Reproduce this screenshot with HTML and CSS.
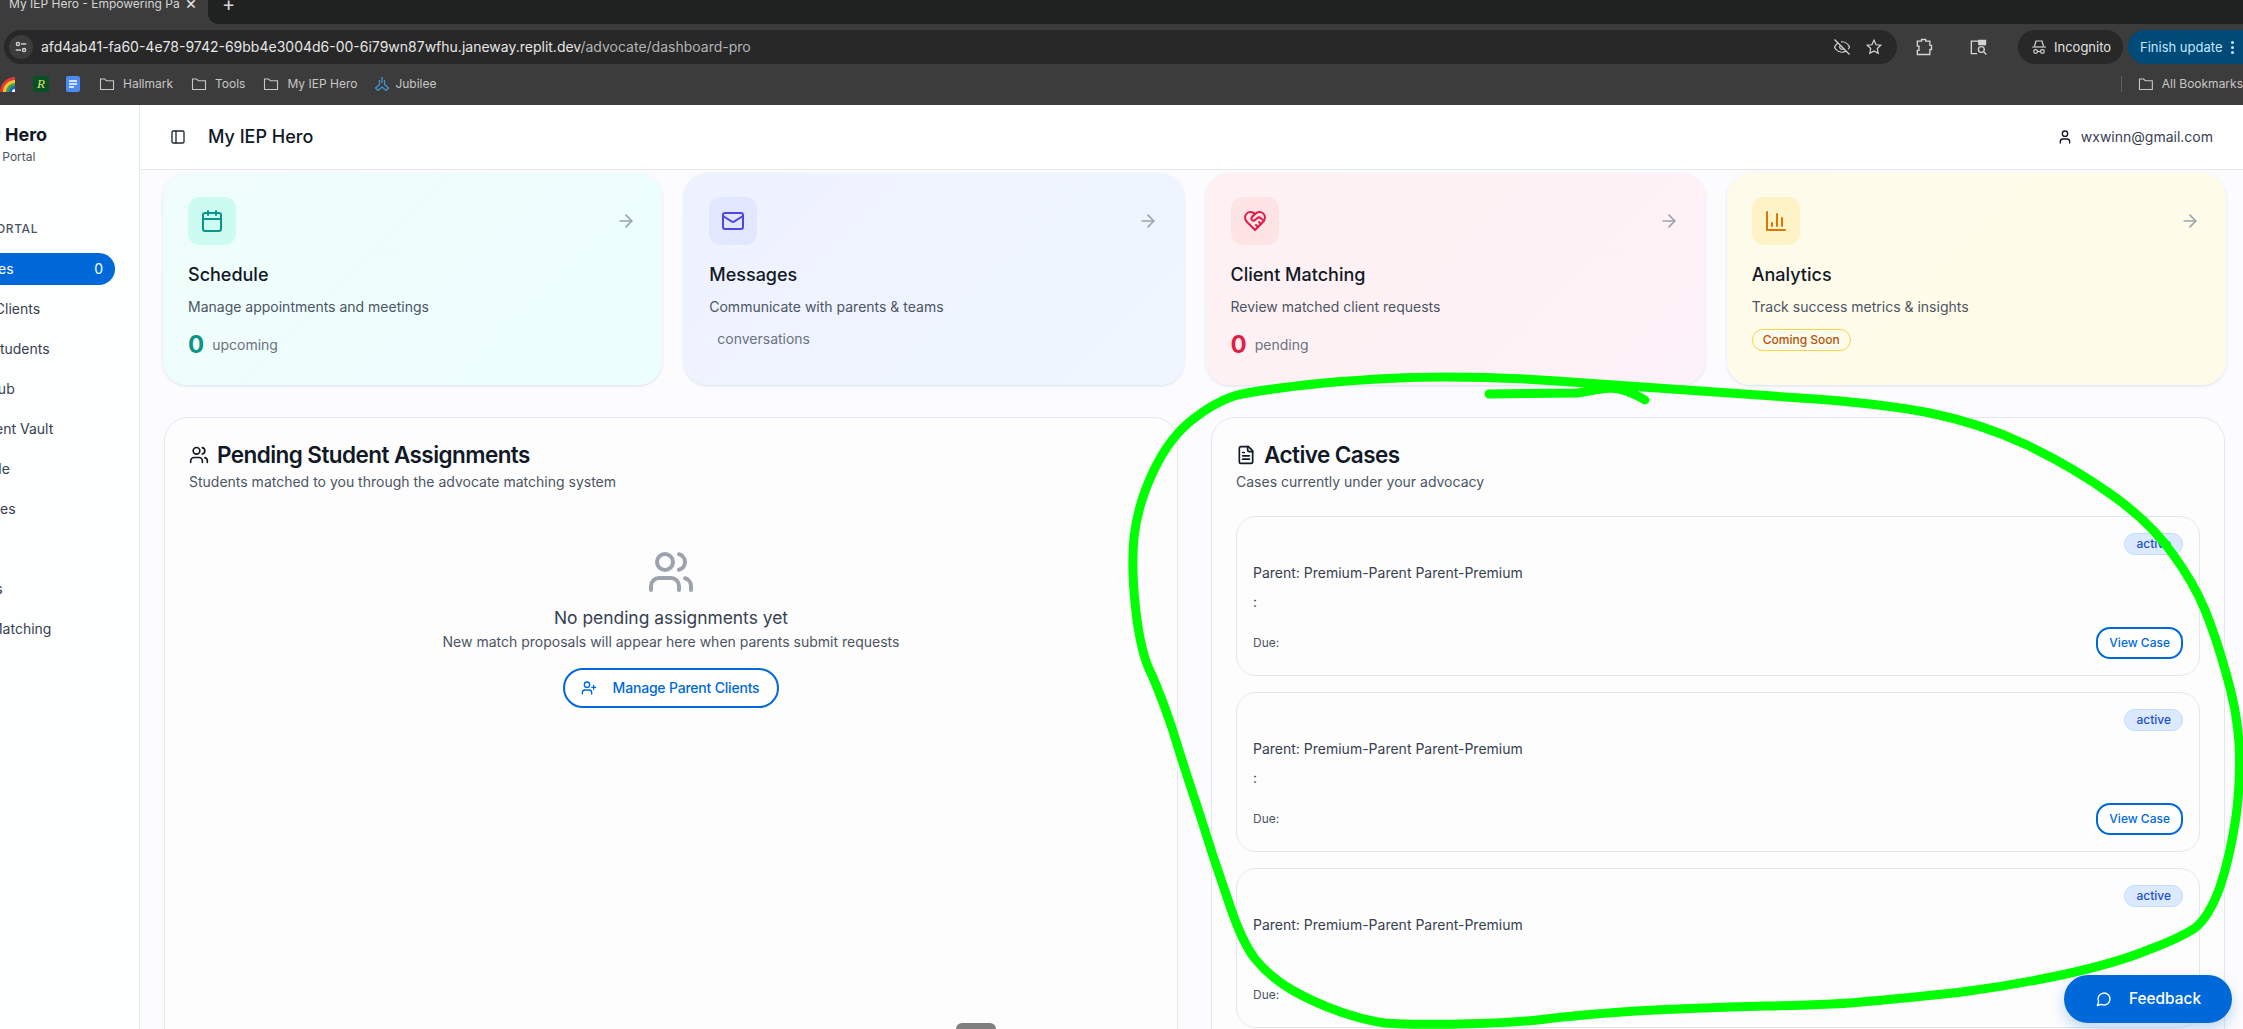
FILE: index.html
```html
<!DOCTYPE html>
<html lang="en">
<head>
  <meta charset="UTF-8" />
  <title>My IEP Hero - Empowering Parents</title>
  <link rel="stylesheet" href="styles.css">
</head>
<body>

  <svg class="sprite" width="0" height="0">
    <symbol id="i-arrow" viewBox="0 0 24 24"><path d="M5 12h14"/><path d="m12 5 7 7-7 7"/></symbol>
    <symbol id="i-users" viewBox="0 0 24 24"><path d="M16 21v-2a4 4 0 0 0-4-4H6a4 4 0 0 0-4 4v2"/><circle cx="9" cy="7" r="4"/><path d="M22 21v-2a4 4 0 0 0-3-3.87"/><path d="M16 3.13a4 4 0 0 1 0 7.75"/></symbol>
    <symbol id="i-folder" viewBox="0 0 16 16"><path d="M1.5 13.5V3h4.2l1.6 1.7h7.2v8.8z"/></symbol>
  </svg>

  <!-- browser chrome -->
  <div class="tabstrip">
    <div class="tab">
      <span class="tab-title">My IEP Hero - Empowering Pa</span>
      <span class="tab-close">×</span>
    </div>
    <div class="tab-rest"><span class="tab-new">+</span></div>
  </div>

  <div class="toolbar">
    <div class="address">
      <span class="site-btn">
        <svg viewBox="0 0 16 16" class="chrome-icon small"><circle cx="4.5" cy="4.5" r="1.8"/><path d="M8 4.500h6"/><circle cx="11.500" cy="11.500" r="1.8"/><path d="M2 11.500h6"/></svg>
      </span>
      <span class="url">afd4ab41-fa60-4e78-9742-69bb4e3004d6-00-6i79wn87wfhu.janeway.replit.dev<span class="url-path">/advocate/dashboard-pro</span></span>
      <svg viewBox="0 0 24 24" class="chrome-icon addr-eye"><path d="M9.88 9.88a3 3 0 1 0 4.24 4.24"/><path d="M10.73 5.08A10.43 10.43 0 0 1 12 5c7 0 10 7 10 7a13.16 13.16 0 0 1-1.67 2.68"/><path d="M6.61 6.61A13.526 13.526 0 0 0 2 12s3 7 10 7a9.74 9.74 0 0 0 5.39-1.61"/><path d="m2 2 20 20"/></svg>
      <svg viewBox="0 0 24 24" class="chrome-icon addr-star"><polygon points="12 3 14.8 9 21 9.7 16.4 14 17.6 20.5 12 17.3 6.4 20.5 7.6 14 3 9.7 9.2 9"/></svg>
    </div>
    <div class="tools">
      <svg viewBox="0 0 24 24" class="chrome-icon tool-icon"><path d="M4 5h5V3h5v2h5v5h2v5h-2v6H4v-5h2v-5H4z"/></svg>
      <span class="tool-sep"></span>
      <svg viewBox="0 0 24 24" class="chrome-icon tool-icon"><path d="M11 20H4V5h16v5"/><path class="fill" d="M13 4h8v5h-8z"/><circle cx="16" cy="15" r="3.500"/><path d="m19 18 3 3"/></svg>
      <span class="tool-sep"></span>
      <div class="incognito">
        <svg viewBox="0 0 24 24" class="chrome-icon"><path d="M6 11 8 4h8l2 7"/><path d="M3 12h18"/><circle cx="7.500" cy="18" r="2.500"/><circle cx="16.500" cy="18" r="2.500"/><path d="M10 18h4"/></svg>
        <span>Incognito</span>
      </div>
      <div class="finish"><span>Finish update</span><span class="dots"></span></div>
    </div>
  </div>

  <div class="bookmarks">
    <svg viewBox="0 0 16 16" class="bm-rainbow"><circle cx="16" cy="16" r="15" fill="#e53935"/><circle cx="16" cy="16" r="12" fill="#fbc02d"/><circle cx="16" cy="16" r="9" fill="#43a047"/><circle cx="16" cy="16" r="6" fill="#1e63d0"/><circle cx="16" cy="16" r="3" fill="#fff"/></svg>
    <span class="bm-r">R</span>
    <svg viewBox="0 0 16 16" class="bm-docs"><rect x="1" width="14" height="16" rx="2" fill="#4a8af4"/><path d="M4 5h8M4 8h8M4 11h5" stroke="#fff" stroke-width="1.6"/></svg>
    <a class="bm"><svg class="bm-folder"><use href="#i-folder"/></svg>Hallmark</a>
    <a class="bm"><svg class="bm-folder"><use href="#i-folder"/></svg>Tools</a>
    <a class="bm"><svg class="bm-folder"><use href="#i-folder"/></svg>My IEP Hero</a>
    <a class="bm bm-jubilee">
      <svg viewBox="0 0 16 16" class="bm-jub"><path d="M8 1v6M5.500 4v4.500L1.500 12l2.500 2.500L8 11l4 3.500 2.500-2.500-4-3.500V4"/></svg>Jubilee
    </a>
    <span class="bm-sep"></span>
    <a class="bm bm-all"><svg class="bm-folder"><use href="#i-folder"/></svg>All Bookmarks</a>
  </div>

  <!-- app -->
  <div class="app">
    <aside class="sidebar">
      <div class="side-inner">
        <div class="logo">My IEP Hero</div>
        <div class="logo-sub">Advocate Portal</div>
        <div class="side-label">Advocate Portal</div>
        <nav class="nav">
          <a class="nav-item active"><span>My Cases</span><span>0</span></a>
          <a class="nav-item">Parent Clients</a>
          <a class="nav-item item-students">Paired Students</a>
          <a class="nav-item">Tools Hub</a>
          <a class="nav-item">Document Vault</a>
          <a class="nav-item">Schedule</a>
          <a class="nav-item">Messages</a>
          <a class="nav-item">Help</a>
          <a class="nav-item">Invoices</a>
          <a class="nav-item">Client Matching</a>
        </nav>
      </div>
    </aside>

    <main class="main">
      <header class="topbar">
        <svg viewBox="0 0 24 24" class="icon toggle"><rect x="3" y="3" width="18" height="18" rx="2"/><path d="M9 3v18"/></svg>
        <h1>My IEP Hero</h1>
        <div class="account">
          <svg viewBox="0 0 24 24" class="icon"><path d="M19 21v-2a4 4 0 0 0-4-4H9a4 4 0 0 0-4 4v2"/><circle cx="12" cy="7" r="4"/></svg>
          <span>wxwinn@gmail.com</span>
        </div>
      </header>

      <div class="content">
        <section class="quick">
          <div class="quick-card teal">
            <div class="quick-top">
              <span class="quick-icon"><svg viewBox="0 0 24 24" class="icon"><path d="M8 2v4"/><path d="M16 2v4"/><rect x="3" y="4" width="18" height="18" rx="2"/><path d="M3 10h18"/></svg></span>
              <svg class="icon arrow"><use href="#i-arrow"/></svg>
            </div>
            <h3>Schedule</h3>
            <p>Manage appointments and meetings</p>
            <div class="stat"><strong>0</strong><span>upcoming</span></div>
          </div>

          <div class="quick-card indigo">
            <div class="quick-top">
              <span class="quick-icon"><svg viewBox="0 0 24 24" class="icon"><rect x="2" y="4" width="20" height="16" rx="2"/><path d="m22 7-8.97 5.700a1.940 1.940 0 0 1-2.060 0L2 7"/></svg></span>
              <svg class="icon arrow"><use href="#i-arrow"/></svg>
            </div>
            <h3>Messages</h3>
            <p>Communicate with parents &amp; teams</p>
            <div class="stat"><strong></strong><span>conversations</span></div>
          </div>

          <div class="quick-card rose">
            <div class="quick-top">
              <span class="quick-icon"><svg viewBox="0 0 24 24" class="icon"><path d="M19 14c1.490-1.460 3-3.210 3-5.500A5.500 5.500 0 0 0 16.500 3c-1.760 0-3 .5-4.500 2-1.500-1.500-2.740-2-4.500-2A5.500 5.500 0 0 0 2 8.500c0 2.300 1.500 4.050 3 5.500l7 7Z"/><path d="M12 5 9.040 7.960a2.170 2.170 0 0 0 0 3.080c.82.82 2.130.85 3 .07l2.070-1.900a2.820 2.820 0 0 1 3.790 0l2.960 2.660"/><path d="m18 15-2-2"/><path d="m15 18-2-2"/></svg></span>
              <svg class="icon arrow"><use href="#i-arrow"/></svg>
            </div>
            <h3>Client Matching</h3>
            <p>Review matched client requests</p>
            <div class="stat"><strong>0</strong><span>pending</span></div>
          </div>

          <div class="quick-card amber">
            <div class="quick-top">
              <span class="quick-icon"><svg viewBox="0 0 24 24" class="icon"><path d="M3 3v18h18"/><path d="M18 17V9"/><path d="M13 17V5"/><path d="M8 17v-3"/></svg></span>
              <svg class="icon arrow"><use href="#i-arrow"/></svg>
            </div>
            <h3>Analytics</h3>
            <p>Track success metrics &amp; insights</p>
            <div class="stat"><span class="soon">Coming Soon</span></div>
          </div>
        </section>

        <section class="panels">
          <div class="panel">
            <h2><svg class="icon"><use href="#i-users"/></svg>Pending Student Assignments</h2>
            <p class="panel-sub">Students matched to you through the advocate matching system</p>
            <div class="empty">
              <svg class="icon empty-icon"><use href="#i-users"/></svg>
              <h4>No pending assignments yet</h4>
              <p>New match proposals will appear here when parents submit requests</p>
              <a class="btn-manage">
                <svg viewBox="0 0 24 24" class="icon"><path d="M16 21v-2a4 4 0 0 0-4-4H6a4 4 0 0 0-4 4v2"/><circle cx="9" cy="7" r="4"/><path d="M19 8v6"/><path d="M22 11h-6"/></svg>
                Manage Parent Clients
              </a>
            </div>
          </div>

          <div class="panel">
            <h2><svg viewBox="0 0 24 24" class="icon"><path d="M15 2H6a2 2 0 0 0-2 2v16a2 2 0 0 0 2 2h12a2 2 0 0 0 2-2V7Z"/><path d="M14 2v4a2 2 0 0 0 2 2h4"/><path d="M10 9H8"/><path d="M16 13H8"/><path d="M16 17H8"/></svg>Active Cases</h2>
            <p class="panel-sub">Cases currently under your advocacy</p>
            <div class="cases">
              <div class="case">
                <div class="case-head"><span class="badge">active</span></div>
                <div class="case-parent">Parent: Premium-Parent Parent-Premium</div>
                <div class="case-line">:</div>
                <div class="case-foot"><span>Due:</span><a class="btn-view">View Case</a></div>
              </div>
              <div class="case">
                <div class="case-head"><span class="badge">active</span></div>
                <div class="case-parent">Parent: Premium-Parent Parent-Premium</div>
                <div class="case-line">:</div>
                <div class="case-foot"><span>Due:</span><a class="btn-view">View Case</a></div>
              </div>
              <div class="case">
                <div class="case-head"><span class="badge">active</span></div>
                <div class="case-parent">Parent: Premium-Parent Parent-Premium</div>
                <div class="case-line">:</div>
                <div class="case-foot"><span>Due:</span><a class="btn-view">View Case</a></div>
              </div>
            </div>
          </div>
        </section>
      </div>
    </main>
  </div>

  <!-- hand drawn annotation on top of the screenshot -->
  <svg class="scribble" viewBox="0 0 2243 1029">
    <path d="M1614 385 L1800 398 Q1879 403 1930 413 Q1980 423 2027 445 Q2073 467 2112 495 Q2151 523 2172 553 Q2194 583 2205 610 Q2216 637 2226 673 Q2237 710 2239 743 Q2241 777 2236 817 Q2230 857 2220 887 Q2209 917 2195 928 Q2180 938 2148 950 Q2116 963 2066 974 Q2015 985 1962 992 Q1908 998 1872 1001 Q1836 1005 1765 1006 Q1693 1008 1636 1011 Q1578 1015 1546 1019 Q1514 1023 1460 1024 Q1406 1025 1385 1023 Q1363 1020 1338 1011 Q1313 1002 1292 990 Q1270 977 1256 960 Q1242 943 1228 900 Q1213 857 1199 812 Q1184 767 1172 728 Q1159 690 1150 671 Q1141 653 1136 612 Q1131 570 1134 537 Q1138 503 1154 470 Q1170 437 1192 420 Q1213 403 1234 396 Q1256 390 1324 383 Q1392 377 1446 377 Q1500 377 1557 381 L1614 385"/>
    <path d="M1489 394 L1578 393 Q1598 389 1610 388 Q1625 388 1645 400"/>
  </svg>

  <a class="feedback">
    <svg viewBox="0 0 24 24" class="icon"><path d="M7.900 20A9 9 0 1 0 4 16.100L2 22Z"/></svg>
    Feedback
  </a>
  <div class="grabber"></div>

</body>
</html>
```

FILE: styles.css
```css
* {
  box-sizing: border-box;
}

html, body {
  margin: 0;
  height: 100%;
  overflow: hidden;
}

body {
  position: relative;
  font-family: Inter, "Noto Sans", sans-serif;
  font-size: 14px;
  line-height: 20px;
  color: #111827;
  background: #fcfcfe;
}

h1, h2, h3, h4, p {
  margin: 0;
}

.sprite {
  position: absolute;
}

.icon {
  width: 20px;
  height: 20px;
  fill: none;
  stroke: currentColor;
  stroke-width: 2;
  stroke-linecap: round;
  stroke-linejoin: round;
  flex: none;
}

/* browser chrome */
.tabstrip {
  display: flex;
  height: 24px;
  background: #3c3c3c;
  overflow: hidden;
}

.tab {
  display: flex;
  width: 208px;
  padding-left: 9px;
  font-size: 12px;
  line-height: 16px;
  color: #d5d5d5;
}

.tab-title {
  width: 172px;
  margin-top: -4px;
  white-space: nowrap;
  overflow: hidden;
}

.tab-close {
  margin-top: -5px;
  margin-left: 4px;
  font-size: 18px;
  color: #e3e3e3;
}

.tab-rest {
  flex: 1;
  background: #202221;
  border-bottom-left-radius: 10px;
  padding-left: 14px;
}

.tab-new {
  display: block;
  margin-top: -6px;
  font-size: 20px;
  color: #d5d5d5;
}

.toolbar {
  display: flex;
  height: 46px;
  padding: 6px 0 6px 4px;
  background: #3c3c3c;
}

.address {
  flex: 1;
  display: flex;
  align-items: center;
  height: 34px;
  padding: 0 14px 0 5px;
  background: #282828;
  border-radius: 17px;
}

.site-btn {
  display: flex;
  align-items: center;
  justify-content: center;
  width: 24px;
  height: 24px;
  border-radius: 50%;
  background: #3c3c3c;
}

.chrome-icon {
  width: 18px;
  height: 18px;
  fill: none;
  stroke: #d5d5d5;
  stroke-width: 1.6;
  flex: none;
}

.chrome-icon.small {
  width: 14px;
  height: 14px;
}

.chrome-icon .fill {
  fill: #d5d5d5;
}

.url {
  flex: 1;
  margin-left: 8px;
  font-size: 14px;
  color: #e6e6e6;
  white-space: nowrap;
}

.url-path {
  color: #b4b4b4;
}

.addr-star {
  margin-left: 14px;
}

.tools {
  display: flex;
  align-items: center;
  width: 346px;
  height: 34px;
  padding-left: 17px;
  overflow: hidden;
}

.tool-icon {
  width: 20px;
  height: 20px;
}

.tool-sep {
  width: 2px;
  height: 16px;
  margin: 0 17px;
  background: #5e5e5e;
}

.incognito {
  display: flex;
  align-items: center;
  gap: 6px;
  width: 105px;
  height: 34px;
  margin-left: -4px;
  padding-left: 12px;
  font-size: 13px;
  color: #e3e3e3;
  background: #282828;
  border-radius: 17px;
  flex: none;
}

.finish {
  display: flex;
  align-items: center;
  gap: 9px;
  width: 130px;
  height: 34px;
  margin-left: 5px;
  padding-left: 12px;
  font-size: 13px;
  color: #c2e7ff;
  background: #004a77;
  border-radius: 17px;
  flex: none;
}

.dots {
  width: 3px;
  height: 3px;
  border-radius: 50%;
  background: #c2e7ff;
  box-shadow: 0 -5px 0 #c2e7ff, 0 5px 0 #c2e7ff;
}

.bookmarks {
  display: flex;
  align-items: center;
  height: 35px;
  padding-bottom: 7px;
  background: #3c3c3c;
  font-size: 12px;
  color: #c7c7c7;
}

.bm-rainbow {
  width: 16px;
  height: 16px;
  margin-left: -1px;
}

.bm-r {
  width: 16px;
  height: 16px;
  margin-left: 18px;
  text-align: center;
  font: italic 13px/16px "Liberation Serif", serif;
  color: #d8e46b;
  background: #0b4f25;
}

.bm-docs {
  width: 16px;
  height: 16px;
  margin-left: 16px;
}

.bm {
  display: flex;
  align-items: center;
  gap: 8px;
  margin-left: 18px;
}

.bm-folder {
  width: 16px;
  height: 16px;
  fill: none;
  stroke: #c7c7c7;
  stroke-width: 1.1;
}

.bm-jubilee {
  gap: 5px;
  margin-left: 17px;
}

.bm-jub {
  width: 16px;
  height: 16px;
  fill: none;
  stroke: #3f9ad6;
  stroke-width: 1.2;
}

.bm-sep {
  width: 1px;
  height: 16px;
  margin-left: auto;
  background: #5e5e5e;
}

.bm-all {
  width: 105px;
  margin-left: 16px;
  white-space: nowrap;
  overflow: hidden;
}

/* app shell */
.app {
  display: flex;
  height: 924px;
}

.sidebar {
  width: 140px;
  background: #fdfefe;
  border-right: 1px solid #e8eaee;
  overflow: hidden;
  flex: none;
}

.side-inner {
  width: 235px;
  margin-left: -120px;
  padding-top: 16px;
}

.logo {
  padding-left: 61px;
  font-size: 18px;
  line-height: 28px;
  font-weight: 700;
  white-space: nowrap;
}

.logo-sub {
  padding-left: 65px;
  font-size: 12px;
  line-height: 16px;
  color: #4b5563;
  white-space: nowrap;
}

.side-label {
  margin-top: 56px;
  padding-left: 34px;
  font-size: 12px;
  line-height: 16px;
  font-weight: 500;
  letter-spacing: 0.05em;
  text-transform: uppercase;
  color: #4b5563;
  white-space: nowrap;
}

.nav {
  display: flex;
  flex-direction: column;
  gap: 8px;
  margin-top: 16px;
}

.nav-item {
  display: flex;
  align-items: center;
  justify-content: space-between;
  height: 32px;
  padding: 0 12px 0 68px;
  color: #374151;
  white-space: nowrap;
}

.nav-item.item-students {
  padding-left: 65px;
}

.nav-item.active {
  color: #fff;
  background: #0069d9;
  border-radius: 16px;
}

.main {
  flex: 1;
  min-width: 0;
}

.topbar {
  display: flex;
  align-items: center;
  height: 65px;
  padding: 0 30px 1px 30px;
  background: #fff;
  border-bottom: 1px solid #e5e7eb;
}

.toggle {
  width: 16px;
  height: 16px;
  color: #1f2937;
}

.topbar h1 {
  margin-left: 22px;
  font-size: 18px;
  line-height: 28px;
  font-weight: 500;
}

.account {
  display: flex;
  align-items: center;
  gap: 8px;
  margin-left: auto;
  color: #374151;
}

.account .icon {
  width: 16px;
  height: 16px;
  color: #111827;
}

.content {
  padding: 3px 17px 0 23px;
}

/* quick action cards */
.quick {
  display: grid;
  grid-template-columns: repeat(4, 1fr);
  gap: 22px;
}

.quick-card {
  padding: 24px 25px;
  border-radius: 24px;
  box-shadow: 0 1px 3px rgba(59, 90, 160, 0.18);
}

.teal { background: linear-gradient(135deg, #f0fdfa, #ecfeff); }
.indigo { background: linear-gradient(135deg, #eef2ff, #eff6ff); }
.rose { background: linear-gradient(135deg, #fff1f2, #fdf2f8); }
.amber { background: linear-gradient(135deg, #fffbeb, #fefce8); }

.quick-top {
  display: flex;
  align-items: center;
  justify-content: space-between;
}

.quick-icon {
  display: flex;
  align-items: center;
  justify-content: center;
  width: 48px;
  height: 48px;
  border-radius: 12px;
}

.quick-icon .icon {
  width: 24px;
  height: 24px;
}

.teal .quick-icon { background: #ccfbf1; color: #0d9488; }
.indigo .quick-icon { background: #e0e7ff; color: #4f46e5; }
.rose .quick-icon { background: #ffe4e6; color: #e11d48; }
.amber .quick-icon { background: #fef3c7; color: #d97706; }

.arrow {
  color: #9ca3af;
  margin-right: 1px;
}

.quick-card h3 {
  margin-top: 16px;
  font-size: 18px;
  line-height: 28px;
  font-weight: 500;
}

.quick-card p {
  margin-top: 8px;
  color: #4b5563;
}

.stat {
  display: flex;
  align-items: center;
  gap: 8px;
  margin-top: 12px;
  color: #6b7280;
}

.stat strong {
  font-size: 24px;
  line-height: 32px;
  font-weight: 700;
}

.stat strong:empty {
  line-height: 20px;
}

.teal .stat strong { color: #0d9488; }
.rose .stat strong { color: #e11d48; }

.soon {
  height: 22px;
  padding: 0 10px;
  font-size: 12px;
  line-height: 20px;
  font-weight: 500;
  color: #b45309;
  border: 1px solid #fcd34d;
  border-radius: 11px;
}

/* lower panels */
.panels {
  display: grid;
  grid-template-columns: 1fr 1fr;
  gap: 33px;
  margin: 32px 1px 0;
}

.panel {
  height: 700px;
  padding: 24px;
  background: #fdfdfd;
  border: 1px solid #e2e8f0;
  border-radius: 24px;
}

.panel h2 {
  display: flex;
  align-items: center;
  gap: 8px;
  font-size: 22.5px;
  line-height: 26px;
  font-weight: 600;
  letter-spacing: -0.025em;
}

.panel-sub {
  margin-top: 4px;
  color: #4b5563;
}

.empty {
  display: flex;
  flex-direction: column;
  align-items: center;
  padding-top: 56px;
  text-align: center;
}

.empty-icon {
  width: 48px;
  height: 48px;
  color: #9ca3af;
}

.empty h4 {
  margin-top: 8px;
  font-size: 17.4px;
  line-height: 28px;
  font-weight: 400;
  color: #374151;
}

.empty p {
  color: #4b5563;
}

.btn-manage {
  display: flex;
  align-items: center;
  gap: 16px;
  height: 40px;
  margin-top: 16px;
  padding: 0 18px 0 16px;
  font-weight: 500;
  letter-spacing: -0.2px;
  color: #0069d9;
  border: 2px solid #0069d9;
  border-radius: 20px;
  background: #fff;
}

.btn-manage .icon {
  width: 16px;
  height: 16px;
}

.cases {
  display: flex;
  flex-direction: column;
  gap: 16px;
  margin-top: 24px;
}

.case {
  height: 160px;
  padding: 16px;
  border: 1px solid #e2e8f0;
  border-radius: 20px;
  background: #fdfdfd;
}

.case-head {
  display: flex;
  justify-content: flex-end;
}

.badge {
  height: 22px;
  padding: 0 11px;
  font-size: 12px;
  line-height: 20px;
  font-weight: 500;
  color: #1d4ed8;
  background: #dbeafe;
  border: 1px solid #bfdbfe;
  border-radius: 11px;
}

.case-parent {
  margin-top: 8px;
  color: #374151;
}

.case-line {
  margin-top: 9px;
  color: #374151;
}

.case-foot {
  display: flex;
  align-items: center;
  justify-content: space-between;
  margin-top: 15px;
  font-size: 12px;
  color: #4b5563;
}

.btn-view {
  height: 32px;
  padding: 0 11px;
  line-height: 28px;
  font-weight: 500;
  color: #0069d9;
  background: #fff;
  border: 2px solid #0069d9;
  border-radius: 14px;
}

/* things over the page */
.scribble {
  position: absolute;
  top: 0;
  left: 0;
  width: 2243px;
  height: 1029px;
  fill: none;
  stroke: #00ff00;
  stroke-width: 9;
  stroke-linecap: round;
  stroke-linejoin: round;
  pointer-events: none;
}

.feedback {
  position: absolute;
  right: 11px;
  bottom: 6px;
  display: flex;
  align-items: center;
  gap: 17px;
  height: 48px;
  padding: 0 31px 0 32px;
  font-size: 15.4px;
  font-weight: 500;
  color: #fff;
  background: #0069d9;
  border-radius: 24px;
  box-shadow: 0 6px 14px rgba(0, 105, 217, 0.25);
}

.feedback .icon {
  width: 16px;
  height: 16px;
}

.grabber {
  position: absolute;
  left: 956px;
  bottom: 0;
  width: 40px;
  height: 6px;
  background: #7f7f7f;
  border-radius: 6px 6px 0 0;
}
```
